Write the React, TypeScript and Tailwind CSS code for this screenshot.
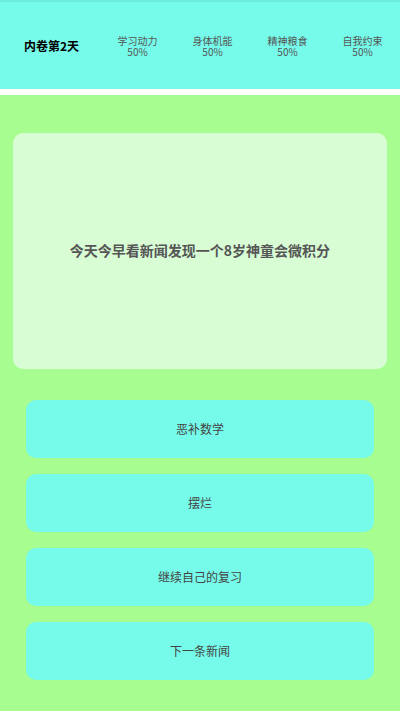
import React from "react";

const stats = [
  { label: "学习动力", value: "50%" },
  { label: "身体机能", value: "50%" },
  { label: "精神粮食", value: "50%" },
  { label: "自我约束", value: "50%" },
];

const options = ["恶补数学", "摆烂", "继续自己的复习", "下一条新闻"];

export default function App() {
  return (
    <div
      className="w-[400px] h-[711px] bg-[#a7fd8f] flex flex-col overflow-hidden"
      style={{ fontFamily: '"Noto Sans CJK SC", "Noto Sans", sans-serif' }}
    >
      <header className="h-[89px] bg-[#76fbea] border-t-2 border-[#6cecdb] flex items-center">
        <div className="w-[100px] pl-[24px] text-[12px] font-bold text-black leading-none">
          内卷第2天
        </div>
        <div className="flex-1 grid grid-cols-4">
          {stats.map((s) => (
            <div
              key={s.label}
              className="flex flex-col items-center text-[10px] leading-[11px] text-[#555]"
            >
              <span>{s.label}</span>
              <span>{s.value}</span>
            </div>
          ))}
        </div>
      </header>
      <div className="h-[6px] bg-white" />
      <main className="flex-1 flex flex-col pt-[38px]">
        <section className="mx-[13px] h-[236px] rounded-[10px] bg-[#d8fdd5] flex items-center justify-center">
          <p className="text-[14px] font-bold text-[#555] -mt-[2px]">
            今天今早看新闻发现一个8岁神童会微积分
          </p>
        </section>
        <div className="mt-[31px] mx-[26px] flex flex-col gap-[16px]">
          {options.map((o) => (
            <button
              key={o}
              className="h-[58px] rounded-[10px] bg-[#76fbea] text-[12px] text-[#444] flex items-center justify-center"
            >
              {o}
            </button>
          ))}
        </div>
      </main>
    </div>
  );
}
